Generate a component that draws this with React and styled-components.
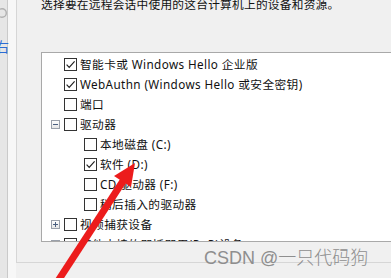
import React from "react";
import styled, { createGlobalStyle } from "styled-components";

const Global = createGlobalStyle`
  html, body { margin: 0; padding: 0; background: #f0f0f0; }
  body { font-family: "Noto Sans", "Noto Sans CJK SC", sans-serif; }
`;

const Screen = styled.div`
  position: relative;
  width: 391px;
  height: 278px;
  overflow: hidden;
  display: flex;
  background: #f0f0f0;
`;

const StripA = styled.div`
  width: 7px;
  flex: none;
  background: #e6e6e6;
  border-right: 1px solid #cacaca;
  display: flex;
  flex-direction: column;
  align-items: flex-start;
`;

const StripIcon = styled.svg`
  margin-top: 7px;
  flex: none;
`;

const StripLink = styled.span`
  position: relative;
  z-index: 1;
  flex: none;
  margin-top: 19px;
  margin-left: -5px;
  font-size: 14px;
  line-height: 16px;
  color: #2a6cd4;
  font-family: "Noto Sans CJK SC", sans-serif;
  white-space: nowrap;
`;

const StripB = styled.div`
  width: 8px;
  flex: none;
  background: #f7f7f7;
`;

const Main = styled.div`
  flex: 1;
  display: flex;
  flex-direction: column;
  min-width: 0;
`;

const Panel = styled.div`
  border-left: 1px solid #d6d6d6;
  border-bottom: 1px solid #d6d6d6;
  padding: 0 0 20px 24px;
  display: flex;
  flex-direction: column;
`;

const Intro = styled.div`
  margin-top: -4px;
  font-size: 11.7px;
  letter-spacing: 0.25px;
  line-height: 16px;
  color: #111;
  white-space: nowrap;
  font-family: "Noto Sans CJK SC", sans-serif;
`;

const Tree = styled.div`
  margin-top: 40px;
  height: 190px;
  width: 400px;
  box-sizing: border-box;
  background: #fff;
  border: 1px solid #a9a9a9;
  border-right: none;
  padding-top: 1px;
  overflow: hidden;
  display: flex;
  flex-direction: column;
`;

const Row = styled.div`
  flex: none;
  height: 20px;
  display: flex;
  align-items: center;
  padding-left: ${(p) => 9 + p.$level * 20}px;
`;

const ExpSlot = styled.div`
  width: 9px;
  height: 9px;
  flex: none;
  margin-right: 4px;
  display: flex;
`;

const Box = styled.div`
  width: 13px;
  height: 13px;
  flex: none;
  box-sizing: border-box;
  border: 1px solid #333;
  background: #fff;
  display: flex;
  align-items: center;
  justify-content: center;
`;

const Label = styled.span`
  margin-left: 3px;
  font-size: 11.7px;
  letter-spacing: 0.4px;
  line-height: 16px;
  color: #111;
  white-space: nowrap;
`;

const Footer = styled.div`
  flex: 1;
  background: #f0f0f0;
`;

const Watermark = styled.div`
  position: absolute;
  left: 204px;
  top: 246px;
  font-size: 18px;
  line-height: 24px;
  color: #8e8e8e;
  font-family: "Liberation Sans", "Noto Sans CJK SC", sans-serif;
  font-weight: 300;
  white-space: nowrap;
  pointer-events: none;
`;

const Overlay = styled.svg`
  position: absolute;
  left: 0;
  top: 0;
  pointer-events: none;
`;

const Expander = ({ kind }) => (
  <svg width="9" height="9" viewBox="0 0 9 9">
    <defs>
      <linearGradient id="eg" x1="0" y1="0" x2="0" y2="1">
        <stop offset="0" stopColor="#ffffff" />
        <stop offset="1" stopColor="#e4e4e4" />
      </linearGradient>
    </defs>
    <rect x="0.5" y="0.5" width="8" height="8" fill="url(#eg)" stroke="#9aa0aa" />
    <line x1="2" y1="4.5" x2="7" y2="4.5" stroke="#4b5f80" strokeWidth="1" />
    {kind === "plus" && <line x1="4.5" y1="2" x2="4.5" y2="7" stroke="#4b5f80" strokeWidth="1" />}
  </svg>
);

const Check = () => (
  <svg width="11" height="11" viewBox="0 0 11 11">
    <path d="M1.6 5.6 L4.2 8.3 L9.6 2.4" fill="none" stroke="#222" strokeWidth="1.2" />
  </svg>
);

const rows = [
  { level: 0, exp: null, checked: true, label: "智能卡或 Windows Hello 企业版" },
  { level: 0, exp: null, checked: true, label: "WebAuthn (Windows Hello 或安全密钥)" },
  { level: 0, exp: null, checked: false, label: "端口" },
  { level: 0, exp: "minus", checked: false, label: "驱动器" },
  { level: 1, exp: null, checked: false, label: "本地磁盘 (C:)" },
  { level: 1, exp: null, checked: true, label: "软件 (D:)" },
  { level: 1, exp: null, checked: false, label: "CD 驱动器 (F:)" },
  { level: 1, exp: null, checked: false, label: "稍后插入的驱动器" },
  { level: 0, exp: "plus", checked: false, label: "视频捕获设备" },
  { level: 0, exp: "minus", checked: false, label: "其他支持的即插即用(PnP)设备" },
];

export default function App() {
  return (
    <Screen>
      <Global />
      <StripA>
        <StripIcon width="7" height="12" viewBox="0 0 7 12">
          <circle cx="2" cy="6" r="4.3" fill="none" stroke="#b0b0b0" strokeWidth="1.4" />
        </StripIcon>
        <StripLink>右</StripLink>
      </StripA>
      <StripB />
      <Main>
        <Panel>
          <Intro>选择要在远程会话中使用的这台计算机上的设备和资源。</Intro>
          <Tree>
            {rows.map((r, i) => (
              <Row key={i} $level={r.level}>
                <ExpSlot>{r.exp && <Expander kind={r.exp} />}</ExpSlot>
                <Box>{r.checked && <Check />}</Box>
                <Label>{r.label}</Label>
              </Row>
            ))}
          </Tree>
        </Panel>
        <Footer />
      </Main>
      <Watermark>CSDN @一只代码狗</Watermark>
      <Overlay width="391" height="278" viewBox="0 0 391 278">
        <line x1="56" y1="284" x2="125" y2="178" stroke="#ec1c1c" strokeWidth="7" />
        <polygon points="135,163 131,187 114,176" fill="#ec1c1c" />
      </Overlay>
    </Screen>
  );
}
